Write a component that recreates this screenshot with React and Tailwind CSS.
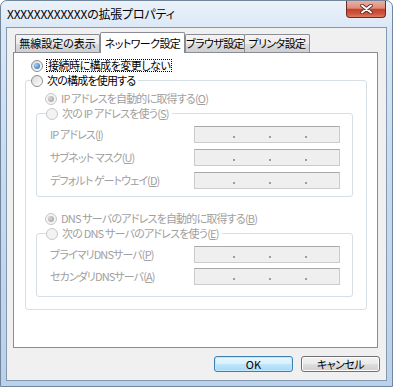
import React from "react";

function Radio({ checked, disabled }) {
  return (
    <span
      className={`flex h-[12px] w-[12px] shrink-0 items-center justify-center rounded-full border ${
        disabled
          ? "border-[#c8c8c8] bg-[#f3f3f3]"
          : "border-[#8e8f8f] bg-[linear-gradient(135deg,#d9d9d9,#ffffff)]"
      }`}
    >
      {checked && (
        <span
          className={`h-[6px] w-[6px] rounded-full ${
            disabled
              ? "bg-[radial-gradient(circle_at_35%_35%,#d8d8d8,#9a9a9a)]"
              : "bg-[radial-gradient(circle_at_35%_35%,#a6d4ff,#1d5fb4)]"
          }`}
        />
      )}
    </span>
  );
}

function RadioRow({ checked, disabled, children, className = "" }) {
  return (
    <div className={`flex h-[13px] items-center gap-[4px] leading-[13px] ${className}`}>
      <Radio checked={checked} disabled={disabled} />
      <span className={`whitespace-nowrap tracking-[-0.8px] ${disabled ? "text-[#a0a0a0]" : "text-black"}`}>
        {children}
      </span>
    </div>
  );
}

function IpField() {
  return (
    <div className="flex h-[17px] w-[146px] items-end gap-[34px] border border-[#cbcbcb] border-t-[#a9a9a9] bg-[#efefef] pb-[4px] pl-[38px]">
      <span className="h-[2px] w-[2px] bg-[#9c9c9c]" />
      <span className="h-[2px] w-[2px] bg-[#9c9c9c]" />
      <span className="h-[2px] w-[2px] bg-[#9c9c9c]" />
    </div>
  );
}

function FieldRow({ label }) {
  return (
    <div className="flex items-center">
      <span className="w-[144px] whitespace-nowrap tracking-[-0.9px] text-[#a0a0a0]">{label}</span>
      <IpField />
    </div>
  );
}

function Tab({ children, selected, className = "" }) {
  if (selected) {
    return (
      <div
        className={`relative z-10 -mb-px flex h-[21px] justify-center whitespace-nowrap rounded-t-[2px] border border-b-0 border-[#898c95] bg-white pt-[2px] ${className}`}
      >
        {children}
      </div>
    );
  }
  return (
    <div
      className={`flex h-[18px] items-center justify-center whitespace-nowrap rounded-t-[2px] border border-b-0 border-[#898c95] bg-[linear-gradient(#f4f4f4_0%,#ececec_50%,#dddddd_51%,#cfcfcf_100%)] ${className}`}
    >
      {children}
    </div>
  );
}

export default function App() {
  return (
    <div className="flex h-[387px] w-[393px] flex-col overflow-hidden rounded-t-[7px] border border-[#71859c] bg-[linear-gradient(#eaf2fa_0%,#dae7f5_8%,#c9dcf0_40%,#bad1eb_100%)] text-[11px] [font-family:'Noto_Sans_CJK_JP',sans-serif] [font-feature-settings:'palt']">
      {/* title bar */}
      <div className="flex h-[26px] shrink-0 items-start justify-between">
        <span className="mt-[5px] pl-[6px] text-[12px] leading-[16px] tracking-[-0.2px] text-black">
          XXXXXXXXXXXXの拡張プロパティ
        </span>
        <div className="mr-[6px] flex h-[17px] w-[40px] items-center justify-center rounded-b-[4px] border border-t-0 border-[#6e2b22] bg-[linear-gradient(#eab0a3_0%,#de8c7a_45%,#c5432d_52%,#cf553e_80%,#e07c62_100%)]">
          <svg width="13" height="10" viewBox="0 0 13 10">
            <path d="M2 1.5 L11 8.5 M11 1.5 L2 8.5" stroke="#5a2a24" strokeWidth="3.6" strokeLinecap="round" />
            <path d="M2 1.5 L11 8.5 M11 1.5 L2 8.5" stroke="#ffffff" strokeWidth="2" strokeLinecap="round" />
          </svg>
        </div>
      </div>

      {/* client */}
      <div className="mx-[5px] flex h-[354px] flex-col border border-[#8499b0] bg-[#f0f0f0]">
        <div className="mt-[4px] flex h-[20px] items-end pl-[8px]">
          <Tab className="w-[85px]">無線設定の表示</Tab>
          <Tab selected className="w-[85px] tracking-[-0.6px]">ネットワーク設定</Tab>
          <Tab className="w-[60px] tracking-[-0.6px]">ブラウザ設定</Tab>
          <Tab className="-ml-px w-[66px] tracking-[-0.6px]">プリンタ設定</Tab>
        </div>

        <div className="ml-[6px] flex h-[296px] w-[365px] flex-col border border-[#898c95] bg-white pl-[11px]">
          <div className="mt-[6px] ml-[6px] flex h-[13px] items-center gap-[3px] leading-[13px]">
            <Radio checked />
            <span className="whitespace-nowrap border border-dotted border-black px-px leading-[11px] tracking-[-0.5px]">
              接続時に構成を変更しない
            </span>
          </div>

          {/* outer group */}
          <div className="mt-[8px] flex w-[342px] flex-col rounded-[3px] border border-[#d5dfe5] pb-[12px]">
            <div className="-mt-[7px] ml-[5px] w-fit bg-white pr-[3px]">
              <RadioRow>次の構成を使用する</RadioRow>
            </div>

            <RadioRow checked disabled className="mt-[5px] ml-[19px]">
              IP アドレスを自動的に取得する(<u>O</u>)
            </RadioRow>

            <div className="mt-[8px] ml-[10px] flex w-[317px] flex-col gap-[6px] rounded-[3px] border border-[#d5dfe5] pb-[7px] pl-[13px]">
              <div className="-mt-[7px] -ml-[4px] w-fit bg-white pr-[3px]">
                <RadioRow disabled>
                  次の IP アドレスを使う(<u>S</u>)
                </RadioRow>
              </div>
              <FieldRow label={<>IP アドレス(<u>I</u>)</>} />
              <FieldRow label={<>サブネット マスク(<u>U</u>)</>} />
              <FieldRow label={<>デフォルト ゲートウェイ(<u>D</u>)</>} />
            </div>

            <RadioRow checked disabled className="mt-[15px] ml-[19px]">
              DNS サーバのアドレスを自動的に取得する(<u>B</u>)
            </RadioRow>

            <div className="mt-[8px] ml-[10px] flex w-[317px] flex-col gap-[5px] rounded-[3px] border border-[#d5dfe5] pb-[11px] pl-[13px]">
              <div className="-mt-[7px] -ml-[4px] mb-[1px] w-fit bg-white pr-[3px]">
                <RadioRow disabled>
                  次の DNS サーバのアドレスを使う(<u>E</u>)
                </RadioRow>
              </div>
              <FieldRow label={<>プライマリDNSサーバ(<u>P</u>)</>} />
              <FieldRow label={<>セカンダリDNSサーバ(<u>A</u>)</>} />
            </div>
          </div>
        </div>

        <div className="mt-[8px] flex justify-end gap-[8px] pr-[6px]">
          <button className="h-[16px] w-[79px] rounded-[3px] border border-[#3c7fb1] bg-[linear-gradient(#eaf6fd_0%,#d9f0fc_50%,#bee6fd_51%,#a7d9f5_100%)] text-[11px] leading-[14px] text-black shadow-[inset_0_0_0_1px_#c2e8fc]">
            OK
          </button>
          <button className="h-[16px] w-[79px] rounded-[3px] border border-[#707070] bg-[linear-gradient(#f2f2f2_0%,#ebebeb_50%,#dddddd_51%,#cfcfcf_100%)] text-[11px] leading-[14px] tracking-[-0.5px] text-black shadow-[inset_0_0_0_1px_#fcfcfc]">
            キャンセル
          </button>
        </div>
      </div>
    </div>
  );
}
